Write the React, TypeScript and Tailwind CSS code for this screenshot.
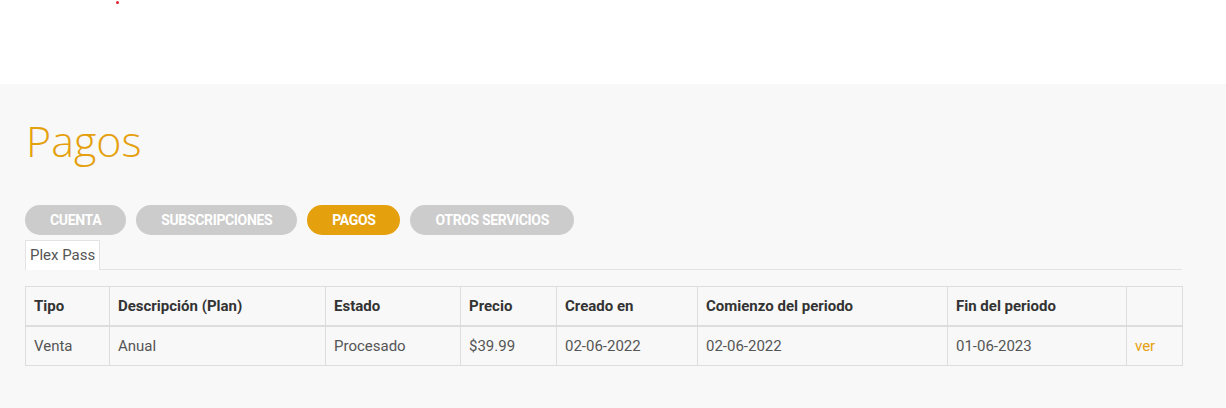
import React from "react";

const tabs = [
  { label: "CUENTA", active: false },
  { label: "SUBSCRIPCIONES", active: false },
  { label: "PAGOS", active: true },
  { label: "OTROS SERVICIOS", active: false },
];

const columns = [
  { label: "Tipo", width: "w-[84px]" },
  { label: "Descripción (Plan)", width: "w-[216px]" },
  { label: "Estado", width: "w-[135px]" },
  { label: "Precio", width: "w-[96px]" },
  { label: "Creado en", width: "w-[141px]" },
  { label: "Comienzo del periodo", width: "w-[250px]" },
  { label: "Fin del periodo", width: "w-[179px]" },
  { label: "", width: "w-[56px]" },
];

const row = ["Venta", "Anual", "Procesado", "$39.99", "02-06-2022", "02-06-2022", "01-06-2023"];

export default function App() {
  return (
    <div className="min-h-[408px] flex flex-col font-['Roboto',sans-serif]">
      <div className="relative h-[84px] bg-white">
        <span className="absolute left-[116px] top-[1px] h-[3px] w-[3px] rounded-full bg-[#e5202e]" />
      </div>

      <div className="flex-1 bg-[#f8f8f8] pl-[25px] pt-[30px] pb-[40px]">
        <h1 className="font-['Open_Sans',sans-serif] text-[43px] font-light leading-[53px] text-[#e5a00d] pl-[1px]">
          Pagos
        </h1>

        <div className="mt-[38px] flex gap-[10px]">
          {tabs.map((t) => (
            <button
              key={t.label}
              className={
                "h-[30px] rounded-full px-[25px] text-[14px] font-bold tracking-[-0.35px] text-white " +
                (t.active ? "bg-[#e5a00d]" : "bg-[#cccccc]")
              }
            >
              {t.label}
            </button>
          ))}
        </div>

        <div className="mt-[5px] flex w-[1157px] border-b border-[#e3e3e3]">
          <div className="-mb-px h-[30px] border border-b-0 border-[#e3e3e3] bg-white px-[4px] text-[15px] leading-[28px] text-[#555]">
            Plex Pass
          </div>
        </div>

        <table className="mt-[16px] w-[1157px] table-fixed border-collapse text-[15px]">
          <thead>
            <tr className="h-[39px]">
              {columns.map((c, i) => (
                <th
                  key={i}
                  className={c.width + " border border-b-2 border-[#dddddd] px-[8px] text-left font-bold text-[#333]"}
                >
                  {c.label}
                </th>
              ))}
            </tr>
          </thead>
          <tbody>
            <tr className="h-[40px]">
              {row.map((v, i) => (
                <td key={i} className="border border-[#dddddd] px-[8px] text-[#555]">
                  {v}
                </td>
              ))}
              <td className="border border-[#dddddd] px-[8px] text-[#e5a00d]">ver</td>
            </tr>
          </tbody>
        </table>
      </div>
    </div>
  );
}
